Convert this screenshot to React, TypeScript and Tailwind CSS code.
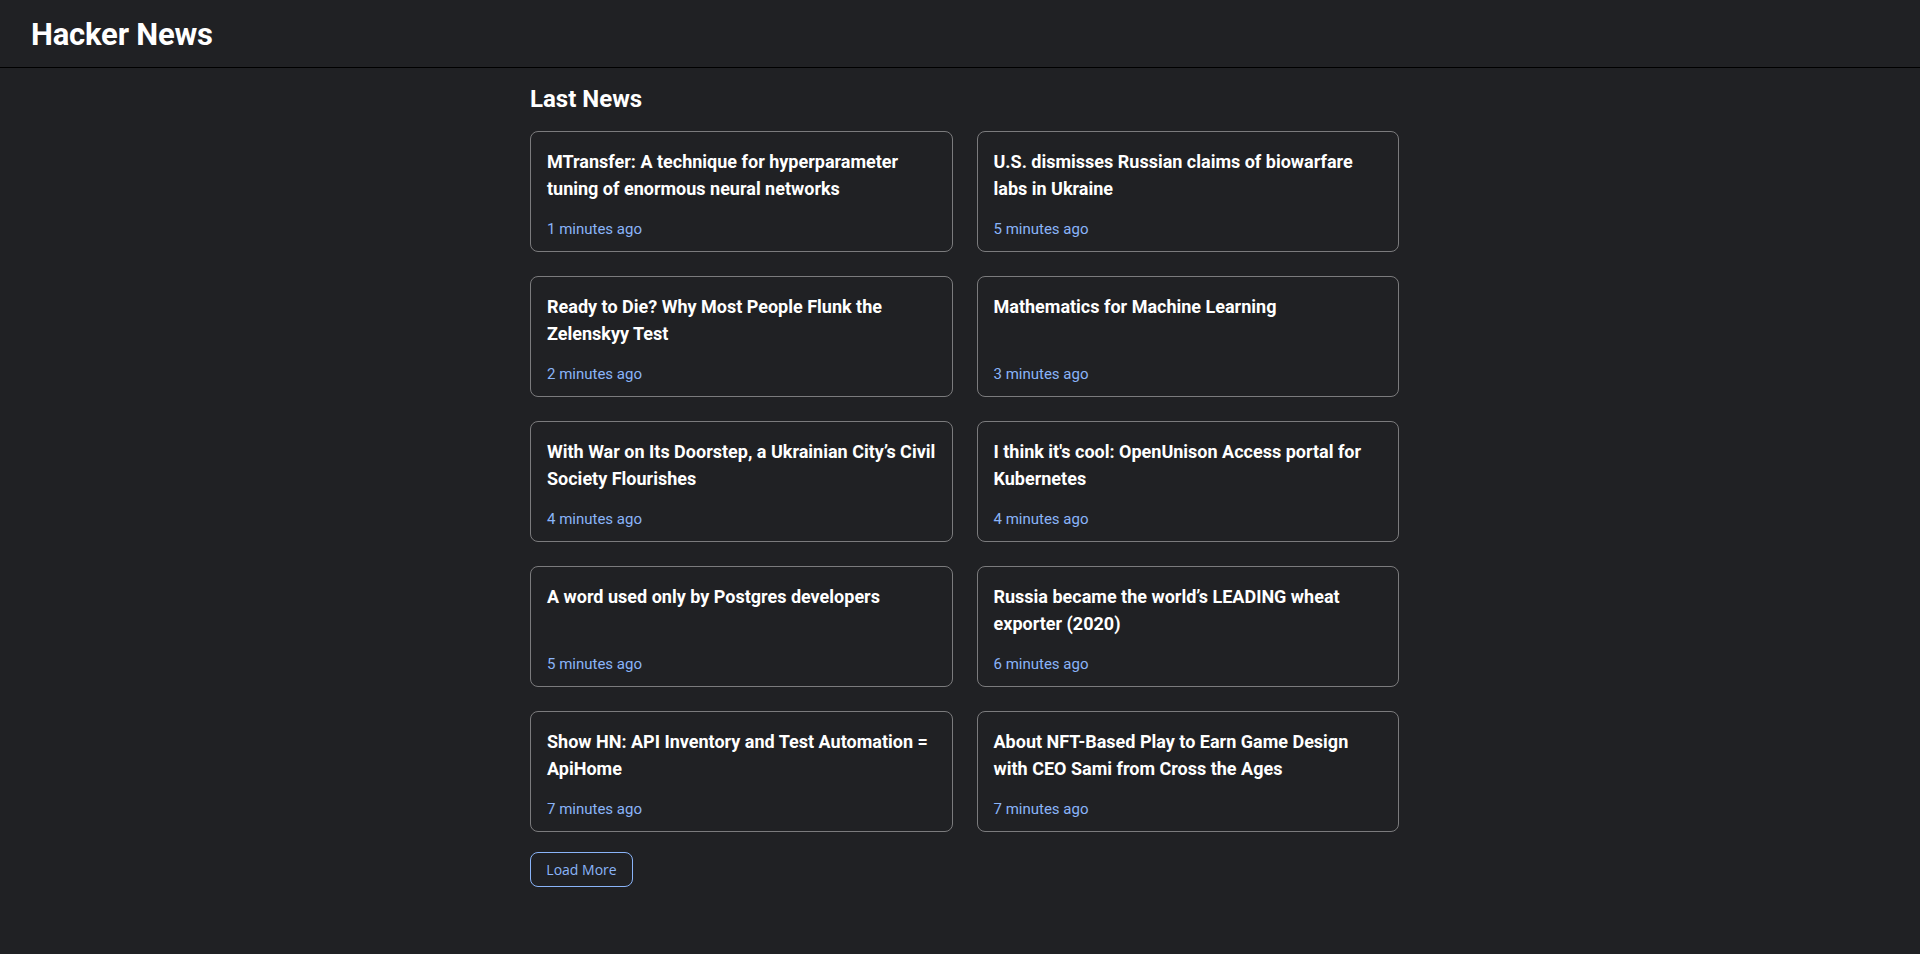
import React from "react";

interface INews {
    title: string;
    time: string;
}

const news: INews[] = [
    { title: "MTransfer: A technique for hyperparameter tuning of enormous neural networks", time: "1 minutes ago" },
    { title: "U.S. dismisses Russian claims of biowarfare labs in Ukraine", time: "5 minutes ago" },
    { title: "Ready to Die? Why Most People Flunk the Zelenskyy Test", time: "2 minutes ago" },
    { title: "Mathematics for Machine Learning", time: "3 minutes ago" },
    { title: "With War on Its Doorstep, a Ukrainian City’s Civil Society Flourishes", time: "4 minutes ago" },
    { title: "I think it's cool: OpenUnison Access portal for Kubernetes", time: "4 minutes ago" },
    { title: "A word used only by Postgres developers", time: "5 minutes ago" },
    { title: "Russia became the world’s LEADING wheat exporter (2020)", time: "6 minutes ago" },
    { title: "Show HN: API Inventory and Test Automation = ApiHome", time: "7 minutes ago" },
    { title: "About NFT-Based Play to Earn Game Design with CEO Sami from Cross the Ages", time: "7 minutes ago" },
];

const App = () => {
    return (
        <div className="min-h-screen bg-[#202124] text-white font-['Roboto',sans-serif]">
            <header className="h-[68px] flex items-center px-[31px] pt-[3px] border-b border-black">
                <h1 className="text-[31px] font-bold tracking-[-0.2px]">Hacker News</h1>
            </header>

            <main className="ml-[530px] w-[869px] pb-10">
                <h2 className="mt-[15px] text-[24px] leading-[32px] font-bold">Last News</h2>

                <div className="mt-[16px] grid grid-cols-2 gap-6">
                    {news.map((item, index) => (
                        <div key={index} className="flex flex-col h-[121px] rounded-lg border border-[#7b7b7d] px-4 pt-[16px] pb-[12px]">
                            <span className="text-[18px] leading-[27px] font-bold">{item.title}</span>
                            <span className="mt-auto text-[15px] leading-5 text-[#8ab4f8]">{item.time}</span>
                        </div>
                    ))}
                </div>

                <button className="mt-5 w-[103px] h-[35px] rounded-lg border border-[#8ab4f8] text-[#8ab4f8] text-[14px] font-['Open_Sans',sans-serif]">
                    Load More
                </button>
            </main>
        </div>
    );
};

export default App;
